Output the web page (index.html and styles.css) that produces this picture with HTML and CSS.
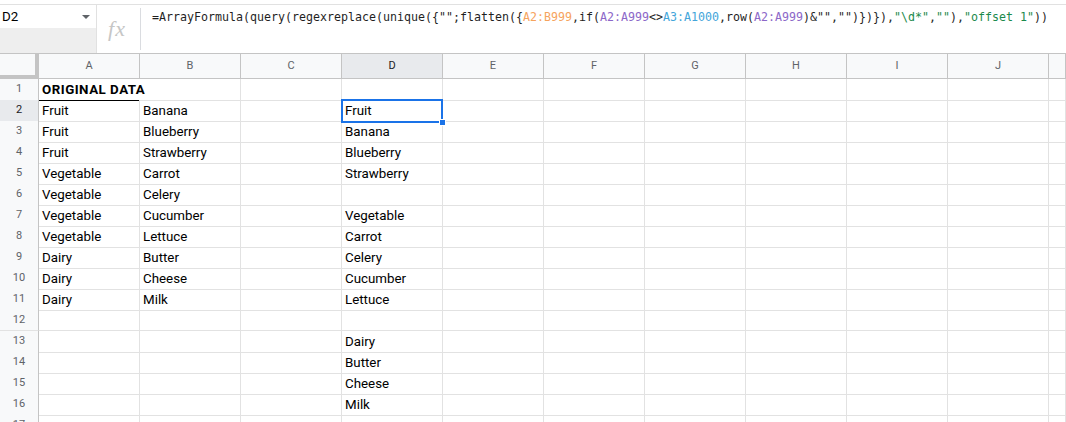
FILE: index.html
```html
<!DOCTYPE html>
<html>
<head>
<meta charset="utf-8">
<link rel="stylesheet" href="styles.css">
</head>
<body>
<div class="topbar">
  <div class="namebox">
    <div class="name-top"><span class="name">D2</span><span class="caret"></span></div>
    <div class="name-bottom"></div>
  </div>
  <div class="fx"><span>fx</span></div>
  <div class="sep"></div>
  <div class="formula">=ArrayFormula(query(regexreplace(unique({"";flatten({<span class="r1">A2:B999</span>,if(<span class="r2">A2:A999</span>&lt;&gt;<span class="r3">A3:A1000</span>,row(<span class="r2">A2:A999</span>)&amp;"","")})}),<span class="s">"\d*"</span>,<span class="s">""</span>),<span class="s">"offset 1"</span>))</div>
</div>
<div class="sheet">
  <div class="row head">
    <div class="corner"></div>
    <div class="ch">A</div><div class="ch">B</div><div class="ch">C</div><div class="ch sel">D</div><div class="ch">E</div><div class="ch">F</div><div class="ch">G</div><div class="ch">H</div><div class="ch">I</div><div class="ch">J</div><div class="ch"></div>
  </div>
  <div class="row">
    <div class="rh">1</div>
    <div class="c title">ORIGINAL DATA</div><div class="c"></div><div class="c"></div><div class="c"></div><div class="c"></div><div class="c"></div><div class="c"></div><div class="c"></div><div class="c"></div><div class="c"></div><div class="c"></div>
  </div>
  <div class="row">
    <div class="rh sel">2</div>
    <div class="c">Fruit</div><div class="c">Banana</div><div class="c"></div><div class="c active">Fruit<span class="handle"></span></div><div class="c"></div><div class="c"></div><div class="c"></div><div class="c"></div><div class="c"></div><div class="c"></div><div class="c"></div>
  </div>
  <div class="row">
    <div class="rh">3</div>
    <div class="c">Fruit</div><div class="c">Blueberry</div><div class="c"></div><div class="c">Banana</div><div class="c"></div><div class="c"></div><div class="c"></div><div class="c"></div><div class="c"></div><div class="c"></div><div class="c"></div>
  </div>
  <div class="row">
    <div class="rh">4</div>
    <div class="c">Fruit</div><div class="c">Strawberry</div><div class="c"></div><div class="c">Blueberry</div><div class="c"></div><div class="c"></div><div class="c"></div><div class="c"></div><div class="c"></div><div class="c"></div><div class="c"></div>
  </div>
  <div class="row">
    <div class="rh">5</div>
    <div class="c">Vegetable</div><div class="c">Carrot</div><div class="c"></div><div class="c">Strawberry</div><div class="c"></div><div class="c"></div><div class="c"></div><div class="c"></div><div class="c"></div><div class="c"></div><div class="c"></div>
  </div>
  <div class="row">
    <div class="rh">6</div>
    <div class="c">Vegetable</div><div class="c">Celery</div><div class="c"></div><div class="c"></div><div class="c"></div><div class="c"></div><div class="c"></div><div class="c"></div><div class="c"></div><div class="c"></div><div class="c"></div>
  </div>
  <div class="row">
    <div class="rh">7</div>
    <div class="c">Vegetable</div><div class="c">Cucumber</div><div class="c"></div><div class="c">Vegetable</div><div class="c"></div><div class="c"></div><div class="c"></div><div class="c"></div><div class="c"></div><div class="c"></div><div class="c"></div>
  </div>
  <div class="row">
    <div class="rh">8</div>
    <div class="c">Vegetable</div><div class="c">Lettuce</div><div class="c"></div><div class="c">Carrot</div><div class="c"></div><div class="c"></div><div class="c"></div><div class="c"></div><div class="c"></div><div class="c"></div><div class="c"></div>
  </div>
  <div class="row">
    <div class="rh">9</div>
    <div class="c">Dairy</div><div class="c">Butter</div><div class="c"></div><div class="c">Celery</div><div class="c"></div><div class="c"></div><div class="c"></div><div class="c"></div><div class="c"></div><div class="c"></div><div class="c"></div>
  </div>
  <div class="row">
    <div class="rh">10</div>
    <div class="c">Dairy</div><div class="c">Cheese</div><div class="c"></div><div class="c">Cucumber</div><div class="c"></div><div class="c"></div><div class="c"></div><div class="c"></div><div class="c"></div><div class="c"></div><div class="c"></div>
  </div>
  <div class="row">
    <div class="rh">11</div>
    <div class="c">Dairy</div><div class="c">Milk</div><div class="c"></div><div class="c">Lettuce</div><div class="c"></div><div class="c"></div><div class="c"></div><div class="c"></div><div class="c"></div><div class="c"></div><div class="c"></div>
  </div>
  <div class="row">
    <div class="rh">12</div>
    <div class="c"></div><div class="c"></div><div class="c"></div><div class="c"></div><div class="c"></div><div class="c"></div><div class="c"></div><div class="c"></div><div class="c"></div><div class="c"></div><div class="c"></div>
  </div>
  <div class="row">
    <div class="rh">13</div>
    <div class="c"></div><div class="c"></div><div class="c"></div><div class="c">Dairy</div><div class="c"></div><div class="c"></div><div class="c"></div><div class="c"></div><div class="c"></div><div class="c"></div><div class="c"></div>
  </div>
  <div class="row">
    <div class="rh">14</div>
    <div class="c"></div><div class="c"></div><div class="c"></div><div class="c">Butter</div><div class="c"></div><div class="c"></div><div class="c"></div><div class="c"></div><div class="c"></div><div class="c"></div><div class="c"></div>
  </div>
  <div class="row">
    <div class="rh">15</div>
    <div class="c"></div><div class="c"></div><div class="c"></div><div class="c">Cheese</div><div class="c"></div><div class="c"></div><div class="c"></div><div class="c"></div><div class="c"></div><div class="c"></div><div class="c"></div>
  </div>
  <div class="row">
    <div class="rh">16</div>
    <div class="c"></div><div class="c"></div><div class="c"></div><div class="c">Milk</div><div class="c"></div><div class="c"></div><div class="c"></div><div class="c"></div><div class="c"></div><div class="c"></div><div class="c"></div>
  </div>
  <div class="row">
    <div class="rh">17</div>
    <div class="c"></div><div class="c"></div><div class="c"></div><div class="c"></div><div class="c"></div><div class="c"></div><div class="c"></div><div class="c"></div><div class="c"></div><div class="c"></div><div class="c"></div>
  </div>
</div>
</body>
</html>
```

FILE: styles.css
```css
* { box-sizing: border-box; }
html, body {
  margin: 0;
  padding: 0;
  width: 1066px;
  height: 422px;
  overflow: hidden;
  background: #fff;
  font-family: Roboto, "Liberation Sans", Arial, sans-serif;
  color: #000;
}

/* ---------- formula bar ---------- */
.topbar {
  margin-top: 4px;
  height: 50px;
  border-top: 1px solid #e1e1e1;
  border-bottom: 1px solid #c4c4c4;
  display: flex;
}
.namebox {
  width: 97px;
  border-right: 1px solid #e1e1e1;
  display: flex;
  flex-direction: column;
}
.name-top {
  height: 23px;
  display: flex;
  align-items: center;
  justify-content: space-between;
  padding: 0 6px 0 2px;
}
.name {
  font-size: 13.33px;
  line-height: 23px;
  color: #000;
}
.caret {
  width: 0;
  height: 0;
  border-left: 4px solid transparent;
  border-right: 4px solid transparent;
  border-top: 4px solid #5f6368;
  margin-top: 1px;
}
.name-bottom {
  flex: 1;
  background: #eeeeee;
}
.fx {
  width: 43px;
  display: flex;
  align-items: center;
  justify-content: center;
  padding-right: 3px;
}
.fx span {
  font-family: "Liberation Serif", "DejaVu Serif", serif;
  font-style: italic;
  font-size: 22px;
  color: #c6c6c6;
  letter-spacing: 1px;
}
.sep {
  width: 1px;
  margin: 3px 0;
  background: #dadce0;
}
.formula {
  flex: 1;
  padding: 4px 0 0 11px;
  font-family: "DejaVu Sans Mono", "Liberation Mono", monospace;
  font-size: 11.63px;
  line-height: 17px;
  color: #1f1f1f;
  white-space: nowrap;
}
.r1 { color: #f6a35d; }
.r2 { color: #8c67c8; }
.r3 { color: #43a5da; }
.s { color: #1b8a4c; }

/* ---------- grid ---------- */
.row {
  display: grid;
  grid-template-columns: 39px repeat(10, 101px) 1fr;
  height: 21px;
}
.row.head {
  height: 25px;
}
.corner {
  background: #f8f9fa;
  border-right: 4px solid #c4c4c4;
  border-bottom: 4px solid #c4c4c4;
}
.ch {
  background: #f8f9fa;
  border-right: 1px solid #c4c4c4;
  border-bottom: 1px solid #c4c4c4;
  font-size: 11px;
  line-height: 24px;
  text-align: center;
  color: #5f6368;
}
.ch.sel {
  background: #e8eaed;
  color: #202124;
}
.rh {
  background: #f8f9fa;
  border-right: 1px solid #c4c4c4;
  border-bottom: 1px solid #e2e2e2;
  font-size: 11px;
  line-height: 20px;
  text-align: center;
  color: #5f6368;
}
.rh.sel {
  background: #e8eaed;
  color: #202124;
}
.c {
  border-right: 1px solid #e2e2e2;
  border-bottom: 1px solid #e2e2e2;
  font-size: 13.33px;
  line-height: 21px;
  padding-left: 3px;
  white-space: nowrap;
  overflow: visible;
}
.c.title {
  font-weight: bold;
  letter-spacing: 0.5px;
  border-bottom-color: #000;
  border-right-color: transparent;
}
.c.active {
  position: relative;
}
.c.active::after {
  content: "";
  position: absolute;
  left: -1px;
  top: -1px;
  right: -1px;
  bottom: -2px;
  border: 2px solid #1a73e8;
  pointer-events: none;
}
.handle {
  position: absolute;
  right: -4px;
  bottom: -5px;
  width: 7px;
  height: 7px;
  background: #1a73e8;
  border: 1px solid #fff;
  z-index: 2;
}
```
